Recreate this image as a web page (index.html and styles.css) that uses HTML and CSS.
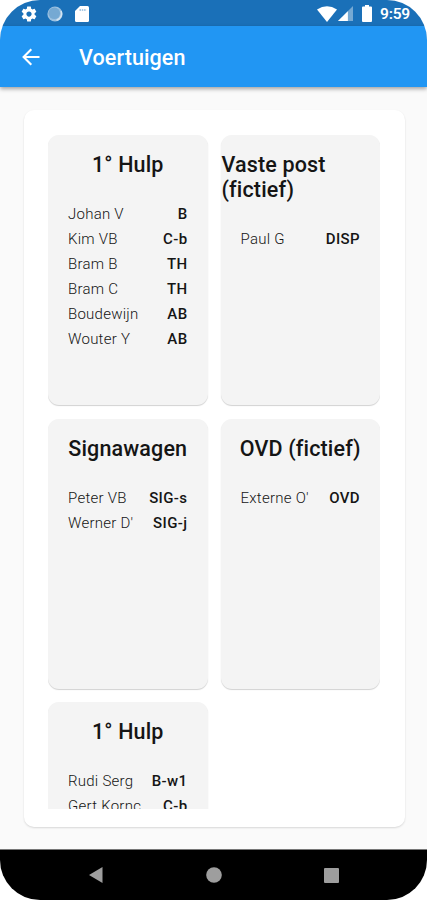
FILE: index.html
```
<!DOCTYPE html>
<html lang="nl">
<head>
  <meta charset="UTF-8">
  <meta name="viewport" content="width=device-width, initial-scale=1.0">
  <title>Voertuigen</title>
  <link rel="stylesheet" href="styles.css">
</head>
<body>
  <div class="phone">
    <!-- Status bar -->
    <div class="status-bar">
      <svg class="icon-gear" width="18" height="18" viewBox="0 0 24 24"><path fill="#fff" d="M19.43 12.98c.04-.32.07-.64.07-.98s-.03-.66-.07-.98l2.11-1.65c.19-.15.24-.42.12-.64l-2-3.46c-.12-.22-.39-.3-.61-.22l-2.49 1c-.52-.4-1.08-.73-1.69-.98l-.38-2.65C14.46 2.18 14.25 2 14 2h-4c-.25 0-.46.18-.49.42l-.38 2.65c-.61.25-1.17.59-1.69.98l-2.49-1c-.23-.09-.49 0-.61.22l-2 3.46c-.13.22-.07.49.12.64l2.11 1.65c-.04.32-.07.65-.07.98s.03.66.07.98l-2.11 1.65c-.19.15-.24.42-.12.64l2 3.46c.12.22.39.3.61.22l2.49-1c.52.4 1.08.73 1.69.98l.38 2.65c.03.24.24.42.49.42h4c.25 0 .46-.18.49-.42l.38-2.65c.61-.25 1.17-.59 1.69-.98l2.49 1c.23.09.49 0 .61-.22l2-3.46c.12-.22.07-.49-.12-.64l-2.11-1.65zM12 15.500c-1.930 0-3.500-1.570-3.500-3.500s1.570-3.500 3.500-3.500 3.500 1.570 3.500 3.500-1.570 3.500-3.500 3.500z"/></svg>
      <svg class="icon-sync" width="16" height="16" viewBox="0 0 16 16"><circle cx="8" cy="8" r="7.600" fill="#9cc1e0"/><circle cx="7.300" cy="7.300" r="5.800" fill="#75a9d3"/><path d="M9.500 14.200A6.800 6.800 0 0 0 14 5" fill="none" stroke="#d3e4f2" stroke-width="1.500"/></svg>
      <svg class="icon-sd" width="14" height="16" viewBox="0 0 14 16"><path fill="#fff" d="M5 0h7.500Q14 0 14 1.500v13q0 1.500-1.500 1.500h-11Q0 16 0 14.500V5z"/><path d="M4.500 4h7" stroke="#a9c9e3" stroke-width="1.800" stroke-dasharray="1.500 .8"/></svg>
      <div class="status-right">
        <svg width="20" height="16" viewBox="0 0 20 16"><path fill="#fff" d="M0 3.500Q10-3 20 3.500L10 16z"/></svg>
        <svg class="icon-signal" width="15" height="15" viewBox="0 0 16 16"><path fill="#76a9d3" d="M16 0v16H0z"/><path fill="#fff" d="M10.500 5.500v10.500H0z"/></svg>
        <svg class="icon-battery" width="10" height="17" viewBox="0 0 10 17"><path fill="#fff" d="M3 0h4v1.500h2q1 0 1 1V16q0 1-1 1H1q-1 0-1-1V2.500q0-1 1-1h2z"/></svg>
        <span class="clock">9:59</span>
      </div>
    </div>

    <!-- App bar -->
    <div class="app-bar">
      <svg width="18" height="18" viewBox="0 0 18 18"><path d="M17.500 9H2M9.300 1.300L1.600 9l7.700 7.700" fill="none" stroke="#fff" stroke-width="2.100"/></svg>
      <h1>Voertuigen</h1>
    </div>

    <div class="content">
      <div class="panel">
        <div class="vehicle-grid">
          <div class="card">
            <h2>1° Hulp</h2>
            <div class="row"><span class="name">Johan V</span><span class="role">B</span></div>
            <div class="row"><span class="name">Kim VB</span><span class="role">C-b</span></div>
            <div class="row"><span class="name">Bram B</span><span class="role">TH</span></div>
            <div class="row"><span class="name">Bram C</span><span class="role">TH</span></div>
            <div class="row"><span class="name">Boudewijn</span><span class="role">AB</span></div>
            <div class="row"><span class="name">Wouter Y</span><span class="role">AB</span></div>
          </div>
          <div class="card">
            <h2>Vaste post (fictief)</h2>
            <div class="row"><span class="name">Paul G</span><span class="role">DISP</span></div>
          </div>
          <div class="card">
            <h2>Signawagen</h2>
            <div class="row"><span class="name">Peter VB</span><span class="role">SIG-s</span></div>
            <div class="row"><span class="name">Werner D'</span><span class="role">SIG-j</span></div>
          </div>
          <div class="card">
            <h2>OVD (fictief)</h2>
            <div class="row"><span class="name">Externe O'</span><span class="role">OVD</span></div>
          </div>
          <div class="card">
            <h2>1° Hulp</h2>
            <div class="row"><span class="name">Rudi Serg</span><span class="role">B-w1</span></div>
            <div class="row"><span class="name">Gert Kornc</span><span class="role">C-b</span></div>
          </div>
        </div>
      </div>
    </div>

    <!-- Android navigation -->
    <div class="nav-bar">
      <svg width="14" height="16" viewBox="0 0 14 16"><path fill="#9e9e9e" d="M13.500 0v16L0 8z"/></svg>
      <svg width="16" height="16" viewBox="0 0 16 16"><circle cx="8" cy="8" r="7.800" fill="#9e9e9e"/></svg>
      <svg width="15" height="15" viewBox="0 0 15 15"><rect width="15" height="15" rx="1" fill="#9e9e9e"/></svg>
    </div>
  </div>
</body>
</html>
```

FILE: styles.css
```
* {
  box-sizing: border-box;
}
body {
  margin: 0;
  background-color: #fff;
  font-family: Roboto, "Liberation Sans", sans-serif;
  color: #151515;
}
.phone {
  display: flex;
  flex-direction: column;
  height: 900px;
  border-radius: 40px;
  overflow: hidden;
  background-color: #fafafa;
}
.status-bar {
  display: flex;
  align-items: center;
  height: 26px;
  flex-shrink: 0;
  padding: 1px 17px 0 20px;
  background-color: #1a70b8;
}
.icon-sync {
  margin-left: 9px;
}
.icon-sd {
  margin-left: 12px;
}
.status-right {
  display: flex;
  align-items: center;
  margin-left: auto;
}
.icon-signal {
  margin-left: 1px;
}
.icon-battery {
  margin-left: 9px;
}
.clock {
  width: 30px;
  margin-left: 8px;
  font-size: 15.5px;
  font-weight: 600;
  line-height: 20px;
  letter-spacing: -0.2px;
  color: #fff;
}
.app-bar {
  display: flex;
  align-items: center;
  height: 61px;
  flex-shrink: 0;
  padding: 1px 22px 0;
  background-color: #2196f3;
  color: #fff;
  box-shadow: 0 2px 4px rgba(0, 0, 0, 0.35);
}
h1 {
  margin: 0 0 0 39px;
  font-size: 21.5px;
  font-weight: 500;
  letter-spacing: 0.1px;
}
.content {
  flex: 1;
  min-height: 0;
  padding: 23px 22px 22px 24px;
}
.panel {
  height: 717px;
  padding: 25px 25px 18px 24px;
  border-radius: 10px;
  background-color: #fff;
  box-shadow: 0 1px 2px rgba(0, 0, 0, 0.14);
}
.vehicle-grid {
  display: grid;
  grid-template-columns: 159.5px 159.5px;
  grid-auto-rows: 270px;
  gap: 13.7px 13px;
  height: 674px;
  overflow: hidden;
}
.card {
  padding-top: 17px;
  border-radius: 11px;
  background-color: #f4f4f4;
  box-shadow: 0 1px 1px rgba(0, 0, 0, 0.18);
}
h2 {
  width: fit-content;
  margin: 0 auto 25px;
  padding: 0 1px;
  font-size: 21.5px;
  font-weight: 500;
  line-height: 25px;
  letter-spacing: 0.15px;
}
.row {
  display: flex;
  justify-content: space-between;
  padding: 0 20px;
  font-size: 15px;
  line-height: 25px;
}
.name {
  font-weight: 300;
  letter-spacing: 0.25px;
  white-space: nowrap;
}
.role {
  font-weight: 500;
  letter-spacing: 0.4px;
}
.nav-bar {
  display: flex;
  align-items: center;
  justify-content: space-between;
  height: 51px;
  flex-shrink: 0;
  padding: 0 88px 0 89px;
  border-top: 1px solid #777;
  background-color: #000;
}
```
